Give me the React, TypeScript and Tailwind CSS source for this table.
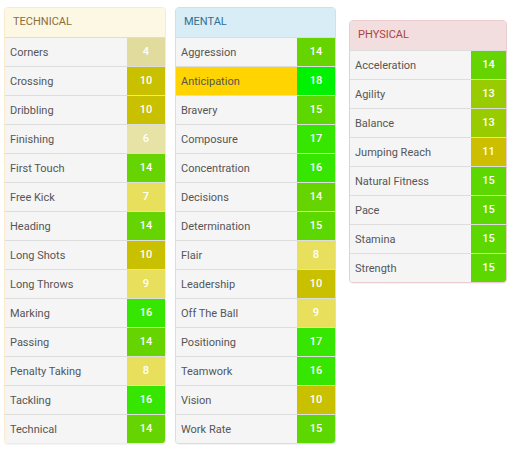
type Attr = [string, number];

const technical: Attr[] = [
  ['Corners', 4],
  ['Crossing', 10],
  ['Dribbling', 10],
  ['Finishing', 6],
  ['First Touch', 14],
  ['Free Kick', 7],
  ['Heading', 14],
  ['Long Shots', 10],
  ['Long Throws', 9],
  ['Marking', 16],
  ['Passing', 14],
  ['Penalty Taking', 8],
  ['Tackling', 16],
  ['Technical', 14],
];

const mental: Attr[] = [
  ['Aggression', 14],
  ['Anticipation', 18],
  ['Bravery', 15],
  ['Composure', 17],
  ['Concentration', 16],
  ['Decisions', 14],
  ['Determination', 15],
  ['Flair', 8],
  ['Leadership', 10],
  ['Off The Ball', 9],
  ['Positioning', 17],
  ['Teamwork', 16],
  ['Vision', 10],
  ['Work Rate', 15],
];

const physical: Attr[] = [
  ['Acceleration', 14],
  ['Agility', 13],
  ['Balance', 13],
  ['Jumping Reach', 11],
  ['Natural Fitness', 15],
  ['Pace', 15],
  ['Stamina', 15],
  ['Strength', 15],
];

function valueClass(v: number) {
  if (v <= 4) return 'bg-[#e1dc9e]';
  if (v <= 6) return 'bg-[#e7e2a6]';
  if (v <= 9) return 'bg-[#e8e05c]';
  if (v === 10) return 'bg-[#c9c000]';
  if (v === 11) return 'bg-[#cdbe00]';
  if (v <= 13) return 'bg-[#99cc00]';
  if (v === 14) return 'bg-[#66d400]';
  if (v === 15) return 'bg-[#5cd800]';
  if (v <= 17) return 'bg-[#36e600]';
  return 'bg-[#00f200]';
}

const panelStyles = {
  warning: { box: 'border-[#faebcc]', head: 'bg-[#fcf8e3] text-[#8a6d3b]' },
  info: { box: 'border-[#bce8f1]', head: 'bg-[#d9edf7] text-[#31708f]' },
  danger: { box: 'border-[#ebccd1]', head: 'bg-[#f2dede] text-[#a94442]' },
};

function Panel({
  title,
  rows,
  kind,
  width,
  valueWidth,
  highlight,
}: {
  title: string;
  rows: Attr[];
  kind: keyof typeof panelStyles;
  width: string;
  valueWidth: string;
  highlight?: string;
}) {
  const s = panelStyles[kind];
  return (
    <div className={`${width} rounded-[4px] border ${s.box} overflow-hidden bg-white shadow-[0_1px_1px_rgba(0,0,0,0.05)]`}>
      <div className={`h-[29px] px-[8px] flex items-center text-[11px] ${s.head}`}>{title}</div>
      {rows.map(([name, v]) => (
        <div
          key={name}
          className={`flex h-[29px] border-t border-[#dddddd] ${
            highlight === name ? 'bg-[#ffd400]' : 'bg-[#f5f5f5]'
          }`}
        >
          <div className="flex-1 flex items-center pl-[5px] pt-[2px] text-[11px] text-[#555]">{name}</div>
          <div
            className={`${valueWidth} flex items-center justify-center pt-[1px] text-[11px] font-medium text-white ${valueClass(v)}`}
          >
            {v}
          </div>
        </div>
      ))}
    </div>
  );
}

export default function App() {
  return (
    <div className="w-[512px] h-[451px] bg-white flex items-start pl-[4px] pt-[7px]" style={{ fontFamily: 'Roboto, "Liberation Sans", sans-serif' }}>
      <Panel title="TECHNICAL" rows={technical} kind="warning" width="w-[162px]" valueWidth="w-[38px]" />
      <div className="ml-[9px]">
        <Panel title="MENTAL" rows={mental} kind="info" width="w-[161px]" valueWidth="w-[38px]" highlight="Anticipation" />
      </div>
      <div className="ml-[13px] mt-[13px]">
        <Panel title="PHYSICAL" rows={physical} kind="danger" width="w-[158px]" valueWidth="w-[35px]" />
      </div>
    </div>
  );
}
